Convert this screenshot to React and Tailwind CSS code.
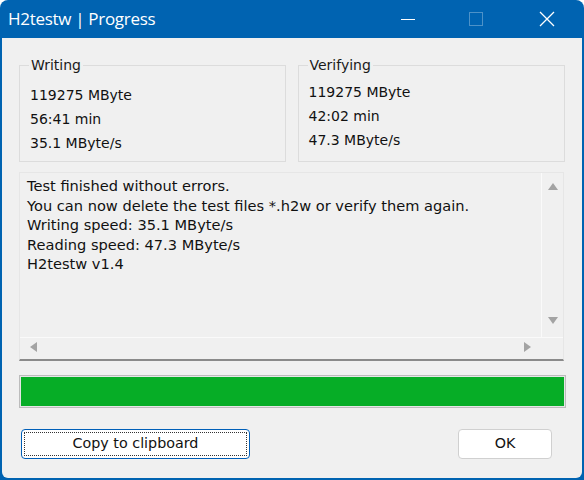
import React from 'react'

const font = { fontFamily: '"DejaVu Sans", Verdana, sans-serif' }

function GroupBox({ label, lines, className, bodyClass }) {
  return (
    <fieldset className={`border border-[#dcdcdc] px-[10px] pb-[8px] pt-0 ${className}`}>
      <legend className="px-[2px] -ml-[1px] text-[14px] text-[#1a1a1a] leading-[18px]">{label}</legend>
      <div className={`flex flex-col text-[14px] text-[#111] leading-[24px] ${bodyClass}`}>
        {lines.map(l => <div key={l}>{l}</div>)}
      </div>
    </fieldset>
  )
}

function Tri({ dir }) {
  const pts = {
    up: '1,9 6,2 11,9',
    down: '1,3 6,10 11,3',
    left: '9,1 2,6 9,11',
    right: '3,1 10,6 3,11',
  }[dir]
  return (
    <svg width="12" height="12" viewBox="0 0 12 12"><polygon points={pts} fill="#a3a3a3" /></svg>
  )
}

export default function App() {
  const log = [
    'Test finished without errors.',
    'You can now delete the test files *.h2w or verify them again.',
    'Writing speed: 35.1 MByte/s',
    'Reading speed: 47.3 MByte/s',
    'H2testw v1.4',
  ]
  return (
    <div className="w-[584px] h-[480px] bg-[#0063b1] rounded-t-[8px] flex flex-col overflow-hidden" style={font}>
      {/* Title bar */}
      <div className="h-[38px] shrink-0 flex items-center text-white">
        <span className="pl-[8px] text-[17px] tracking-[-0.3px]" style={{ fontFamily: '"Open Sans", "Noto Sans", sans-serif' }}>H2testw | Progress</span>
        <div className="ml-auto flex items-center h-full">
          <div className="w-[68px] h-full flex items-center justify-center">
            <div className="w-[14px] h-[1px] bg-white" />
          </div>
          <div className="w-[68px] h-full flex items-center justify-center">
            <div className="w-[14px] h-[14px] border border-white/30" />
          </div>
          <div className="w-[74px] h-full flex items-center justify-center">
            <svg width="16" height="16" viewBox="0 0 16 16"><path d="M1 1L15 15M15 1L1 15" stroke="white" strokeWidth="1.3" /></svg>
          </div>
        </div>
      </div>

      {/* Client */}
      <div className="flex-1 mx-[2px] mb-[2px] bg-[#f0f0f0] rounded-b-[6px] flex flex-col px-[17px]">
        <div className="flex gap-[12px] mt-[18px] h-[106px]">
          <GroupBox label="Writing" className="w-[267px]" bodyClass="mt-[9px]" lines={['119275 MByte', '56:41 min', '35.1 MByte/s']} />
          <GroupBox label="Verifying" className="w-[268px]" bodyClass="mt-[6px]" lines={['119275 MByte', '42:02 min', '47.3 MByte/s']} />
        </div>

        {/* Text area */}
        <div className="mt-[10px] w-[545px] h-[189px] border border-[#e6e6e6] border-b-[#8a8a8a] border-b-2 flex flex-col bg-[#f0f0f0]">
          <div className="flex flex-1 min-h-0">
            <div className="flex-1 pl-[7px] pt-[3px] text-[14.6px] leading-[19.5px] text-[#111] whitespace-nowrap overflow-hidden">
              {log.map(l => <div key={l}>{l}</div>)}
            </div>
            <div className="w-[22px] flex flex-col items-center justify-between pt-[8px] pb-[11px] border-l border-[#fafafa] bg-[#f0f0f0]">
              <Tri dir="up" />
              <Tri dir="down" />
            </div>
          </div>
          <div className="h-[22px] flex items-center justify-between pl-[8px] pr-[30px] pb-[3px] border-t border-[#fafafa]">
            <Tri dir="left" />
            <Tri dir="right" />
          </div>
        </div>

        {/* Progress bar */}
        <div className="mt-[14px] w-[547px] h-[33px] border border-[#bcbcbc] bg-[#e6e6e6] p-[1px]">
          <div className="w-full h-full bg-[#06ad26]" />
        </div>

        {/* Buttons */}
        <div className="mt-[21px] flex justify-between pr-[13px]">
          <button className="ml-[2px] w-[229px] h-[30px] rounded-[4px] border border-[#005fb8] bg-white p-[2px]">
            <div className="w-full h-full border border-dotted border-[#333] flex items-center justify-center text-[14.3px] text-[#111]">Copy to clipboard</div>
          </button>
          <button className="w-[94px] h-[30px] rounded-[4px] border border-[#d0d0d0] bg-white flex items-center justify-center text-[14.3px] text-[#111]">OK</button>
        </div>
      </div>
    </div>
  )
}
